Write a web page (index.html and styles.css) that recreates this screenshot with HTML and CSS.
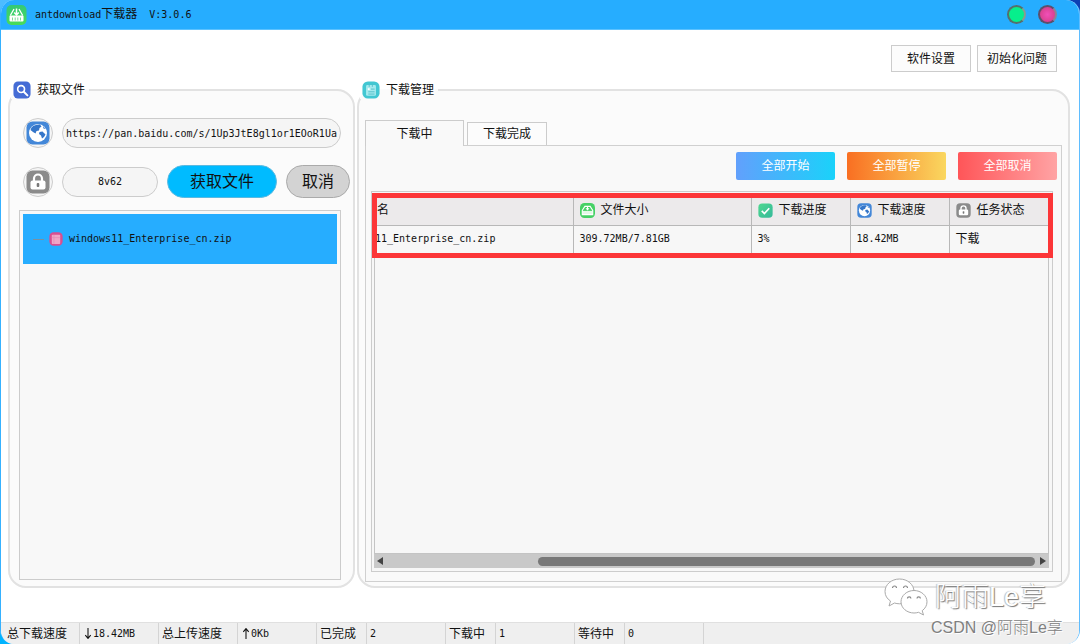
FILE: index.html
```html
<!DOCTYPE html>
<html lang="zh-CN">
<head>
<meta charset="utf-8">
<title>antdownload下载器</title>
<link rel="stylesheet" href="styles.css">
</head>
<body>
<svg class="defs" aria-hidden="true">
  <defs>
    <linearGradient id="g-green" x1="0" y1="0" x2="0" y2="1"><stop offset="0" stop-color="#35c878"/><stop offset="1" stop-color="#48dc58"/></linearGradient>
    <linearGradient id="g-check" x1="0" y1="0" x2="1" y2="1"><stop offset="0" stop-color="#4fd88f"/><stop offset="1" stop-color="#35b99a"/></linearGradient>
    <symbol id="i-app" viewBox="0 0 20 20">
      <rect width="20" height="20" rx="5" fill="url(#g-green)"/>
      <path d="M7.500 4 3.800 10.500M12.500 4l3.700 6.500" fill="none" stroke="#fff" stroke-width="1.300"/>
      <path d="M10 3.500v6M7.700 7.500 10 10l2.300-2.500" fill="none" stroke="#fff" stroke-width="1.500"/>
      <rect x="3" y="10.500" width="14" height="6" rx="1" fill="#fff"/>
      <path d="M6 12.500v3M8.700 12.500v3M11.300 12.500v3M14 12.500v3" stroke="#42cf68" stroke-width=".7"/>
    </symbol>
    <symbol id="i-disk" viewBox="0 0 20 20">
      <rect width="20" height="20" rx="6" fill="#45d165"/>
      <path d="M6.500 4.500h7L17 10v5.500H3V10z" fill="none" stroke="#fff" stroke-width="1.400"/>
      <rect x="3" y="10.500" width="14" height="5" fill="#fff" opacity=".85"/>
      <path d="M10 4.500v4M8 7l2 2 2-2" fill="none" stroke="#fff" stroke-width="1.400"/>
    </symbol>
    <symbol id="i-search" viewBox="0 0 20 20">
      <rect x=".5" y=".5" width="19" height="19" rx="5" fill="#456cd5"/>
      <circle cx="9" cy="9" r="3.800" fill="none" stroke="#fff" stroke-width="1.800"/>
      <path d="m12 12 4 4" stroke="#fff" stroke-width="2.200" stroke-linecap="round"/>
    </symbol>
    <symbol id="i-doc" viewBox="0 0 20 20">
      <rect x=".5" y=".5" width="19" height="19" rx="6" fill="#42c7d2"/>
      <rect x="4.500" y="4.500" width="11" height="12" rx="1.500" fill="#a5eaee"/>
      <path d="M8 3.500v3M11.500 3.500v3M10 9h4M7 12h7M7 14.500h7" stroke="#50bdc8" stroke-width="1"/>
      <path d="M6.500 9h2" stroke="#fff" stroke-width="2"/>
    </symbol>
    <symbol id="i-globe" viewBox="0 0 24 24">
      <rect x=".5" y=".5" width="23" height="23" rx="6" fill="#4387d8"/>
      <circle cx="12" cy="12" r="9" fill="#fff"/>
      <path d="M5.500 6.500C8 4 11 3.300 14 3.500l1.500 2-2 1.500-.5 2.500-2.500.5-1 2.500L7 11l-2.500-2zM13.500 11l3-.5 3 3-1.500 2.500-2 1.500-1-3-2-1.500z" fill="#3576c9"/>
      <path d="m17 5 2.500 3-2-.5z" fill="#3576c9"/>
    </symbol>
    <symbol id="i-lock" viewBox="0 0 24 24">
      <rect x=".5" y=".5" width="23" height="23" rx="6" fill="#8b8b8b"/>
      <path d="M8 11V8.500a4 4 0 0 1 8 0V11" fill="none" stroke="#fff" stroke-width="2.200"/>
      <rect x="4.500" y="10.500" width="15" height="9" rx="2" fill="#fff"/>
      <rect x="10.700" y="13" width="2.600" height="4" rx="1" fill="#777"/>
    </symbol>
    <symbol id="i-check" viewBox="0 0 20 20">
      <rect x=".5" y=".5" width="19" height="19" rx="5" fill="url(#g-check)"/>
      <path d="m5 10.500 3.500 3.500L15 7" fill="none" stroke="#fff" stroke-width="2.200"/>
    </symbol>
    <symbol id="i-zip" viewBox="0 0 20 20">
      <rect x=".5" y=".5" width="19" height="19" rx="6" fill="#d94e90"/>
      <rect x="4" y="4" width="12" height="13" rx="1" fill="#f0a5c7"/>
      <path d="M7 4v13M4 8h12" stroke="#e48bb4" stroke-width="1"/>
    </symbol>
  </defs>
</svg>

<div class="window">
  <header class="titlebar">
    <svg class="icon-app"><use href="#i-app"/></svg>
    <h1 class="title">antdownload<span class="title-cjk">下载器</span>  V:3.0.6</h1>
    <button class="dot dot-green" type="button" aria-label="最小化"></button>
    <button class="dot dot-pink" type="button" aria-label="关闭"></button>
  </header>

  <nav class="toolbar">
    <button class="plain-btn" type="button">软件设置</button>
    <button class="plain-btn" type="button">初始化问题</button>
  </nav>

  <main class="main">
    <fieldset class="group group-fetch">
      <legend class="legend"><svg class="icon-legend"><use href="#i-search"/></svg>获取文件</legend>
      <div class="field-row">
        <label class="badge" for="url" aria-label="链接"><svg class="icon-field"><use href="#i-globe"/></svg></label>
        <input class="pill pill-url" id="url" type="text" value="https://pan.baidu.com/s/1Up3JtE8gl1or1EOoR1Uag">
      </div>
      <div class="field-row field-row-code">
        <label class="badge" for="code" aria-label="提取码"><svg class="icon-field"><use href="#i-lock"/></svg></label>
        <input class="pill pill-code" id="code" type="text" value="8v62">
        <button class="round-btn round-fetch" type="button">获取文件</button>
        <button class="round-btn round-cancel" type="button">取消</button>
      </div>
      <ul class="files">
        <li class="file"><span class="branch"></span><svg class="icon-file"><use href="#i-zip"/></svg>windows11_Enterprise_cn.zip</li>
      </ul>
    </fieldset>

    <fieldset class="group group-manage">
      <legend class="legend"><svg class="icon-legend"><use href="#i-doc"/></svg>下载管理</legend>
      <div class="tabs">
        <button class="tab tab-active" type="button">下载中</button>
        <button class="tab" type="button">下载完成</button>
      </div>
      <section class="panel">
        <div class="actions">
          <button class="action action-start" type="button">全部开始</button>
          <button class="action action-pause" type="button">全部暂停</button>
          <button class="action action-stop" type="button">全部取消</button>
        </div>
        <div class="grid-frame">
          <div class="grid-body">
            <table class="downloads">
              <colgroup><col class="col-name"><col class="col-size"><col class="col-std"><col class="col-std"><col class="col-std"></colgroup>
              <thead>
                <tr>
                  <th class="cell-name">名</th>
                  <th><span class="head"><svg class="icon-head"><use href="#i-disk"/></svg>文件大小</span></th>
                  <th><span class="head"><svg class="icon-head"><use href="#i-check"/></svg>下载进度</span></th>
                  <th><span class="head"><svg class="icon-head"><use href="#i-globe"/></svg>下载速度</span></th>
                  <th><span class="head"><svg class="icon-head"><use href="#i-lock"/></svg>任务状态</span></th>
                </tr>
              </thead>
              <tbody>
                <tr>
                  <td class="cell-cut">11_Enterprise_cn.zip</td>
                  <td>309.72MB/7.81GB</td>
                  <td>3%</td>
                  <td>18.42MB</td>
                  <td class="cell-state">下载</td>
                </tr>
              </tbody>
            </table>
          </div>
          <div class="scrollbar">
            <span class="arrow arrow-left"></span>
            <span class="track"><span class="thumb"></span></span>
            <span class="arrow arrow-right"></span>
          </div>
          <div class="highlight"></div>
        </div>
      </section>
    </fieldset>
  </main>

  <footer class="status">
    <span class="stat stat-label">总下载速度</span>
    <span class="stat"><svg class="icon-arrow" viewBox="0 0 8 12"><path d="M4 1v9M1.500 7.500 4 10.500l2.500-3"/></svg>18.42MB</span>
    <span class="stat stat-label">总上传速度</span>
    <span class="stat"><svg class="icon-arrow" viewBox="0 0 8 12"><path d="M4 11V2M1.500 4.500 4 1.500l2.500 3"/></svg>0Kb</span>
    <span class="stat stat-label stat-short">已完成</span>
    <span class="stat">2</span>
    <span class="stat stat-label stat-short">下载中</span>
    <span class="stat">1</span>
    <span class="stat stat-label stat-short">等待中</span>
    <span class="stat">0</span>
  </footer>

  <div class="watermark">
    <div class="mark-main">
      <svg class="icon-wechat" viewBox="0 0 44 38">
        <g fill="#fff" stroke="#aaa" stroke-width="1">
          <path d="M15.500 1C7.500 1 1 6.500 1 13.500c0 4 2 7.300 5.500 9.500L5 28l5.500-3c1.500.5 3.300.8 5 .8C23.500 25.800 30 20.500 30 13.500S23.500 1 15.500 1z"/>
          <path d="M30 12.500c-7 0-13 5-13 11.300S23 35 30 35c1.500 0 3-.2 4.500-.7L39.500 37l-1.300-4.300c3-2.200 4.800-5.300 4.800-8.900 0-6.300-6-11.300-13-11.300z"/>
        </g>
        <g fill="none" stroke="#888" stroke-width="1.200">
          <path d="M8.500 10a2 2 0 0 1 4 0M19.500 10a2 2 0 0 1 4 0M23.500 20.500a1.700 1.700 0 0 1 3.400 0M33 20.500a1.700 1.700 0 0 1 3.400 0"/>
        </g>
      </svg>
      <span>阿雨Le享</span>
    </div>
    <div class="mark-sub">CSDN @阿雨Le享</div>
  </div>
</div>
</body>
</html>
```
FILE: styles.css
```css
* { box-sizing: border-box; }

body {
  margin: 0;
  background:
    linear-gradient(#0c3fb4, #0c3fb4) top right / 20px 20px no-repeat,
    linear-gradient(#00b4ff, #00b4ff) bottom left / 20px 20px no-repeat,
    linear-gradient(#4cbcff, #4cbcff) top left / 20px 20px no-repeat,
    #fff;
  color: #111;
  font: 12px/16px "DejaVu Sans Mono", "Noto Sans CJK SC", monospace;
}

button, input {
  margin: 0;
  padding: 0;
  color: inherit;
  font: inherit;
}

.defs { position: absolute; width: 0; height: 0; }

.window {
  position: relative;
  display: flex;
  flex-direction: column;
  min-height: 100vh;
  overflow: hidden;
  border-right: 1px solid #5fbdff;
  border-left: 1px solid #35b1ff;
  border-radius: 14px;
  background: #fff;
}

.titlebar {
  display: flex;
  align-items: center;
  height: 30px;
  padding: 0 22px 0 5px;
  border-bottom: 1px solid #5cc2ff;
  background: #26adff;
}

.icon-app { width: 21px; height: 20px; margin-right: 8px; }

.title {
  flex: 1;
  margin: 0;
  font-size: 10px;
  font-weight: 400;
  white-space: pre;
}
.title-cjk { font-size: 12px; }

.dot {
  width: 19px;
  height: 19px;
  margin-left: 12px;
  border: 2px solid #55706c;
  border-right-color: #8a9a90;
  border-radius: 50%;
}
.dot-green { background: #06ef8c; }
.dot-pink { border-color: #5c4f6c; border-right-color: #8a8494; background: radial-gradient(#f050b8, #d03a80); }

.toolbar {
  display: flex;
  justify-content: flex-end;
  gap: 6px;
  padding: 15px 22px 9px;
}

.plain-btn {
  width: 80px;
  height: 27px;
  border: 1px solid #ccc;
  background: #fcfcfc;
}

.main {
  display: grid;
  flex: 1;
  grid-template-columns: 347px 1fr;
  gap: 2px;
  padding: 0 9px 34px 7px;
}

.group {
  display: flex;
  flex-direction: column;
  min-width: 0;
  margin: 0;
  border: 2px solid #e2e2e2;
  border-radius: 18px;
  background: #fbfbfb;
}
.group-fetch { padding: 19px 3px 6px 9px; }
.group-manage { padding: 21px 6px 4px; }

.legend {
  display: flex;
  align-items: center;
  gap: 6px;
  height: 18px;
  padding: 0 4px 0 2px;
}
.group-fetch .legend { margin-left: -8px; }
.group-manage .legend { margin-left: -5px; }

.icon-legend { width: 18px; height: 18px; }

.field-row { display: flex; align-items: center; gap: 9px; padding-left: 4px; }
.field-row-code { margin-top: 17px; }

.badge {
  display: grid;
  place-items: center;
  flex: none;
  width: 30px;
  height: 30px;
  border: 1px solid #ccc;
  border-radius: 50%;
  background: #f5f5f5;
}
.icon-field { width: 24px; height: 24px; }

.pill {
  height: 30px;
  border: 1px solid #ccc;
  border-radius: 15px;
  background: #f5f5f5;
  font-size: 10px;
}
.pill-url { width: 279px; padding: 0 3px; }
.pill-code { width: 96px; text-align: center; }

.round-btn {
  height: 33px;
  border: 1px solid #aaa;
  border-radius: 17px;
  font-size: 16px;
}
.round-fetch { width: 110px; border-color: #5ab9e0; background: #00bbff; }
.round-cancel { width: 64px; background: #d3d3d3; }

.files {
  flex: 1;
  width: 322px;
  margin: 12px 0 0;
  padding: 3px;
  border: 1px solid #ccc;
  background: #f8f8f8;
  list-style: none;
}

.file {
  display: flex;
  align-items: center;
  height: 50px;
  padding-left: 10px;
  background: #26adff;
  font-size: 10px;
}
.branch { width: 11px; margin-right: 5px; border-top: 1px solid #7a90a0; }
.icon-file { width: 14px; height: 14px; margin-right: 6px; }

.tabs { display: flex; align-items: flex-end; gap: 3px; }

.tab {
  width: 80px;
  height: 23px;
  border: 1px solid #ccc;
  border-bottom: 0;
  background: #fcfcfc;
}
.tab-active { z-index: 1; width: 99px; height: 26px; margin-bottom: -1px; background: #f9f9f9; }

.panel {
  display: flex;
  flex: 1;
  flex-direction: column;
  padding: 6px 8px 9px 5px;
  border: 1px solid #d0d0d0;
  background: #f9f9f9;
}

.actions { display: flex; justify-content: flex-end; gap: 12px; margin: 0 -4px 11px 0; }

.action {
  width: 99px;
  height: 28px;
  border: 0;
  border-radius: 2px;
  color: #fff;
}
.action-start { background: linear-gradient(90deg, #62a0fc, #1ad2fa); }
.action-pause { background: linear-gradient(90deg, #f96f22, #fad75f); }
.action-stop { background: linear-gradient(90deg, #ff5558, #ffa3a4); }

.grid-frame {
  position: relative;
  display: flex;
  flex: 1;
  flex-direction: column;
  padding: 4px 3px 3px 2px;
  border: 1px solid #ccc;
  background: #f7f7f7;
}

.grid-body { flex: 1; border: 1px solid #c4c4c4; border-top: 0; }

.downloads { width: 100%; border-collapse: collapse; table-layout: fixed; }
.downloads th, .downloads td {
  height: 28px;
  padding: 0 0 0 6px;
  border-right: 1px solid #b8b8b8;
  text-align: left;
}
.downloads th:last-child, .downloads td:last-child { border-right: 0; }
.downloads th { height: 29px; border-bottom: 1px solid #b8b8b8; background: #eceaeb; font-weight: 400; }
.downloads td { font-size: 10px; white-space: nowrap; }
.downloads .cell-name { padding-left: 2px; }
.downloads .cell-cut { padding-left: 0; }
.downloads .cell-state { font-size: 12px; }
.col-size { width: 178px; }
.col-std { width: 99px; }

.head { display: flex; align-items: center; gap: 6px; }
.icon-head { width: 15px; height: 15px; }

.scrollbar { display: flex; align-items: center; height: 14px; padding: 0 3px; background: #c9c9c9; }
.track { flex: 1; margin: 0 5px 0 6px; }
.thumb { display: block; width: 77%; height: 9px; margin-left: auto; border-radius: 5px; background: #787878; }
.arrow { border: 4px solid transparent; }
.arrow-left { border-right: 6px solid #444; border-left: 0; }
.arrow-right { border-right: 0; border-left: 6px solid #444; }

.highlight {
  position: absolute;
  top: 1px;
  right: -1px;
  left: 0;
  height: 65px;
  border: 5px solid #fc3638;
  pointer-events: none;
}

.status {
  display: flex;
  height: 22px;
  border-top: 1px solid #e0e0e0;
  background: #efefef;
}
.stat {
  display: flex;
  align-items: center;
  flex: none;
  width: 79px;
  padding-left: 3px;
  border-right: 1px solid #d4d4d4;
  font-size: 10px;
}
.stat-label { font-size: 12px; }
.stat-short { width: 50px; }
.stat:first-child { padding-left: 6px; }
.icon-arrow { width: 10px; height: 13px; fill: none; stroke: #111; stroke-width: 1; }

.watermark {
  position: absolute;
  right: 12px;
  bottom: 5px;
  font-family: "Liberation Sans", "Noto Sans CJK SC", sans-serif;
  font-weight: 300;
}
.mark-main {
  display: flex;
  align-items: center;
  gap: 7px;
  margin: 0 21px 1px -47px;
  color: #fff;
  font-size: 27px;
  line-height: 38px;
  text-shadow: 1px 1px 1px #777, -1px 0 1px #bbb;
}
.icon-wechat { width: 44px; height: 38px; }
.mark-sub { color: #808080; font-size: 16px; line-height: 22px; text-shadow: 1px 1px 0 #fff; white-space: nowrap; }
```
